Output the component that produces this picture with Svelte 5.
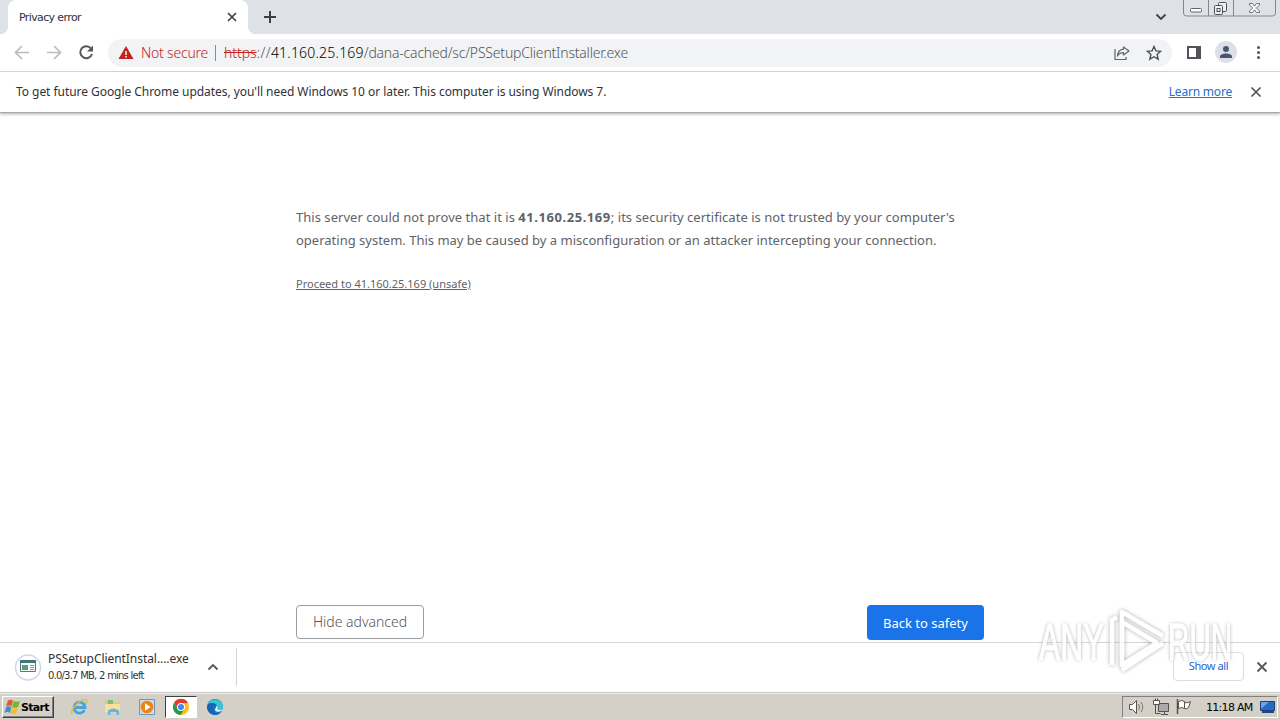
<script>
	const url = { host: '41.160.25.169', path: '/dana-cached/sc/PSSetupClientInstaller.exe' };
</script>

<div class="screen">
	<header class="tabstrip">
		<div class="tab">
			<span class="tab-title">Privacy error</span>
			<svg class="tab-close" width="10" height="10" viewBox="0 0 10 10"><path d="M1 1l8 8M9 1L1 9" stroke="#3c4043" stroke-width="1.7" /></svg>
		</div>
		<svg class="new-tab" width="14" height="14" viewBox="0 0 14 14"><path d="M7 1v12M1 7h12" stroke="#3c4043" stroke-width="2" /></svg>
		<svg class="tab-search" width="12" height="8" viewBox="0 0 12 8"><path d="M1.5 1.5L6 6l4.5-4.5" fill="none" stroke="#3c4043" stroke-width="1.8" /></svg>
		<svg class="window-buttons" width="94" height="18" viewBox="0 0 94 18">
			<path d="M.5 0v13q0 3 3 3h86q3 0 3-3V0M25.500 0v16M50.500 0v16" fill="none" stroke="#84888e" />
			<rect x="7.500" y="8.500" width="11" height="3.500" rx="1" fill="#fff" stroke="#60646b" />
			<g fill="#eef0f3" stroke="#4d5158"><rect x="35.500" y="2.500" width="8" height="9" rx="1" /><rect x="31.500" y="5.500" width="8" height="9" rx="1" /><rect x="34" y="8.500" width="3" height="3" /></g>
			<path d="M66.500 3.500h3l2 2.500 2-2.500h3V5l-3 3 3 3v1.500h-3l-2-2.500-2 2.500h-3V11l3-3-3-3z" fill="#f4f5f7" stroke="#666a70" stroke-width=".9" />
		</svg>
	</header>

	<nav class="toolbar">
		<svg class="nav-icons" width="108" height="36" viewBox="0 0 108 36" fill="none">
			<path d="M29 17.500H16M22 11l-6.500 6.500L22 24M47 17.500h13M54 11l6.500 6.500L54 24" stroke="#babcbe" stroke-width="1.7" />
			<path d="M91 13.500A6 6 0 1 0 92 19" stroke="#55585c" stroke-width="2" />
			<path d="M93 10.500v6h-6z" fill="#55585c" />
		</svg>
		<div class="omnibox">
			<svg class="warning" width="16" height="14" viewBox="0 0 16 14"><path d="M8 0l7.500 13H.5z" fill="#c5221f" /><path d="M8 5v4M8 10v1.600" stroke="#fff" stroke-width="1.500" /></svg>
			<span class="security">Not secure</span>
			<span class="divider"></span>
			<span class="url"><s>https</s><span class="scheme">://</span><b>{url.host}</b><span class="path">{url.path}</span></span>
			<svg class="share" width="18" height="18" viewBox="0 0 18 18" fill="none" stroke="#5f6368" stroke-width="1.200"><path d="M2 5v10.500h11V13" /><path d="M10.500 3l5.500 4-5.500 4V8.700C7.500 8.700 5.500 10 4.500 12c.3-4 2.500-6.500 6-6.800z" stroke-linejoin="round" /></svg>
			<svg class="star" width="16" height="16" viewBox="0 0 16 16"><path d="M8 1.500l1.900 4.400 4.800.4-3.600 3.200 1.100 4.700L8 11.700l-4.200 2.500 1.100-4.700L1.300 6.300l4.800-.4z" fill="none" stroke="#505358" stroke-width="1.400" /></svg>
		</div>
		<svg class="actions" width="108" height="36" viewBox="0 0 108 36">
			<path d="M16 12h12v11H16z" fill="#fff" stroke="#505358" stroke-width="2" /><path d="M24 11h5v13h-5z" fill="#505358" />
			<circle cx="54" cy="17" r="11" fill="#dde1e7" /><circle cx="54" cy="14" r="3" fill="#4a5670" /><path d="M48 23v-1.500c0-4 12-4 12 0V23z" fill="#4a5670" />
			<g fill="#505358"><circle cx="86.500" cy="12.500" r="1.500" /><circle cx="86.500" cy="17.500" r="1.500" /><circle cx="86.500" cy="22.500" r="1.500" /></g>
		</svg>
	</nav>

	<div class="infobar">
		<span class="notice">To get future Google Chrome updates, you'll need Windows 10 or later. This computer is using Windows 7.</span>
		<a href="#learn">Learn more</a>
		<svg width="12" height="12" viewBox="0 0 12 12"><path d="M1.500 1.500l9 9M10.500 1.500l-9 9" stroke="#505358" stroke-width="1.700" /></svg>
	</div>

	<main>
		<p class="reason">
			<span class="line first">This server could not prove that it is <strong>{url.host}</strong>; its security certificate is not trusted by your computer's</span>
			<span class="line">operating system. This may be caused by a misconfiguration or an attacker intercepting your connection.</span>
		</p>
		<a class="proceed" href="#proceed">Proceed to {url.host} (unsafe)</a>
		<div class="buttons">
			<button class="hide">Hide advanced</button>
			<button class="back">Back to safety</button>
		</div>
	</main>

	<section class="downloads">
		<svg class="file-icon" width="28" height="28" viewBox="0 0 28 28">
			<circle cx="14" cy="14.500" r="12.500" fill="#fff" stroke="#ccd6ec" stroke-width="1.500" />
			<path d="M6.500 7.500h15v11h-15z" fill="#f6fbfa" stroke="#5c787b" /><path d="M6 7h16v3H6z" fill="#437477" /><path d="M8 12h6v5H8z" fill="#5c9a80" /><path d="M16 12.500h4M16 14.500h4M16 16.500h4" stroke="#8a9da8" />
		</svg>
		<div class="file">
			<span class="file-name">PSSetupClientInstal....exe</span>
			<span class="file-status">0.0/3.7 MB, 2 mins left</span>
		</div>
		<svg class="chevron" width="12" height="8" viewBox="0 0 12 8"><path d="M1.500 6.500L6 2l4.500 4.500" fill="none" stroke="#55585c" stroke-width="1.800" /></svg>
		<span class="separator"></span>
		<button class="show-all">Show all</button>
		<svg class="shelf-close" width="12" height="12" viewBox="0 0 12 12"><path d="M1.500 1.500l9 9M10.500 1.500l-9 9" stroke="#55585c" stroke-width="1.800" /></svg>
	</section>

	<footer class="taskbar">
		<div class="start">
			<svg width="17" height="16" viewBox="0 0 17 16"><path d="M4 1.500q2.500-1.500 5 0L7.500 7.500q-2.500-2-5.500 0z" fill="#e5592b" /><path d="M9.700 2q3 1.500 6.300 0l-2 6q-3 1.500-6 0z" fill="#72b82e" /><path d="M2 8.200q2.500-1.700 5.300 0L6 14q-2.500-2-5.500 0z" fill="#438dd5" /><path d="M8 8.700q3 1.500 6 0l-1.700 5.800q-3 1.500-5.800 0z" fill="#f4bd2a" /></svg>
			<b>Start</b>
		</div>
		<div class="apps">
			<span class="app">
				<svg width="18" height="18" viewBox="0 0 18 18" fill="none"><path d="M14.500 12A5.500 5.500 0 1 1 15 9.500H5" stroke="#43a6df" stroke-width="2.800" /><path d="M2.500 16C-2 13 12-1 16.500 2c1 1 .2 2.600-.7 3.800" stroke="#e7b93d" stroke-width="1.400" /></svg>
			</span>
			<span class="app">
				<svg width="18" height="18" viewBox="0 0 18 18"><path d="M1 3h5l1 1.500h9V14H1z" fill="#e9c662" /><path d="M4 2h5v4H4z" fill="#79bd78" /><path d="M1 6h15v8H1z" fill="#f7e29d" /><path d="M4 17v-4.500q5-4 11 0V17h-2.500v-3h-6v3z" fill="#69b5df" /></svg>
			</span>
			<span class="app">
				<svg width="18" height="18" viewBox="0 0 18 18"><path d="M1.500 1.500h15v15h-15z" fill="#cbdcea" stroke="#6e99bc" /><circle cx="9" cy="9" r="6.300" fill="#ed8415" /><path d="M7 5.200v7.600L12.500 9z" fill="#fff" /></svg>
			</span>
			<span class="app active">
				<svg width="18" height="18" viewBox="0 0 18 18"><circle cx="9" cy="9" r="8" fill="#fbc116" /><path d="M2 5a8 8 0 0 1 14 0L9 5.200 6 11z" fill="#e33b2e" /><path d="M2 5a8 8 0 0 0 6.500 12l4-6L6 11z" fill="#229b4b" /><circle cx="9" cy="9" r="4" fill="#fff" /><circle cx="9" cy="9" r="3" fill="#4285f4" /></svg>
			</span>
			<span class="app">
				<svg width="18" height="18" viewBox="0 0 18 18"><circle cx="9" cy="9" r="8" fill="#1677c5" /><path d="M2 6C4-1 17 0 17 9c0 4-5 4-7 2 2-3 0-6-4-6-2 0-3 .5-4 1z" fill="#38c5d5" /><path d="M1 9c1-5 8-5 10-1-4-1-5 3-3 6 2 2 5 2 7 0-4 6-14 2-14-5z" fill="#1764b0" /><path d="M10.500 8c2 1-.5 4 2.500 4 2 0 3.500-.5 4-1.500-1 4.500-8 4-8 1z" fill="#e9f4f7" /></svg>
			</span>
		</div>
		<div class="tray">
			<svg width="78" height="20" viewBox="0 0 78 20" fill="#fff" stroke="#55534f">
				<path d="M6.500 7.500h3l4-4v13l-4-4h-3z" /><path d="M15.500 7q2 3 0 6M18 5q3.500 5 0 10" fill="none" stroke="#77746e" />
				<path d="M35.500 6.500h10v8h-10zM38 17.500h7M41.500 14.500v3" fill="#aaa" /><path d="M32.500 7.500v9h5" fill="none" /><path d="M30.500 3.500h6v4h-6zM32.500 1.500v2M34.500 1.500v2" />
				<path d="M54.500 2v15" stroke-width="1.500" /><path d="M55.500 4.500q3-2 6 0v7q-3-2-6 0zM61.500 5.500q3 1 6-1l-2 6q-2 2-4 1" />
			</svg>
			<span class="clock">11:18 AM</span>
			<svg width="18" height="16" viewBox="0 0 18 16"><path d="M1.500 2.500h14v9h-14z" fill="#2869c4" stroke="#1d4277" /><path d="M2 3h8l-7 6H2z" fill="#67a5e8" /><path d="M3 13h12" stroke="#24477a" stroke-width="2" /></svg>
		</div>
	</footer>

	<div class="watermark">
		<span class="any">ANY</span>
		<svg width="62" height="70" viewBox="0 0 62 70" fill="none" stroke-linejoin="round">
			<g class="halo" stroke="#fff" stroke-width="4.500"><path d="M7 59V14l5-3" /><path d="M17 48V6l41 24" /><path d="M17 16v43l35-22-35-21" /><path d="M58 37L17 64" /></g>
		</svg>
		<span class="run">RUN</span>
	</div>
</div>

<style>
	:global(body) {
		margin: 0;
		overflow: hidden;
	}

	.screen {
		width: 1280px;
		height: 720px;
		display: flex;
		flex-direction: column;
		position: relative;
		overflow: hidden;
		background: #fff;
		color: #303236;
		font-family: 'Noto Sans', sans-serif;
	}

	.screen * {
		box-sizing: border-box;
	}

	svg {
		flex: none;
		display: block;
	}

	span, a, strong {
		white-space: nowrap;
	}

	.tabstrip {
		height: 34px;
		background: #dee1e6;
		display: flex;
		align-items: center;
	}

	.tab {
		width: 240px;
		height: 34px;
		margin-left: 8px;
		padding: 0 11px;
		border-radius: 8px 8px 0 0;
		background: #fff;
		display: flex;
		align-items: center;
		justify-content: space-between;
		position: relative;
	}

	.tab::before, .tab::after {
		content: '';
		position: absolute;
		bottom: 0;
		left: -8px;
		width: 8px;
		height: 8px;
		background: radial-gradient(circle at 0 0, #dee1e6 8px, #fff 8.500px);
	}

	.tab::after {
		left: 240px;
		transform: scaleX(-1);
	}

	.tab-title {
		font: 11px/16px 'DejaVu Sans', sans-serif;
		letter-spacing: -0.62px;
		padding-top: 1px;
	}

	.new-tab {
		margin-left: 15px;
	}

	.tab-search {
		margin-left: auto;
	}

	.window-buttons {
		margin: 0 3px 0 16px;
		align-self: flex-start;
	}

	.toolbar {
		height: 38px;
		border-bottom: 1px solid #dadce0;
		display: flex;
		align-items: center;
	}

	.omnibox {
		width: 1064px;
		height: 28px;
		border-radius: 14px;
		background: #f1f3f4;
		display: flex;
		align-items: center;
		padding: 0 10px;
		font-size: 14px;
		font-weight: 300;
	}

	.security {
		margin-left: 7px;
		width: 67px;
		color: #c5221f;
		letter-spacing: -0.2px;
	}

	.divider {
		width: 1px;
		height: 16px;
		margin: 0 8px 0 7px;
		background: #888c90;
	}

	.url {
		letter-spacing: -0.2px;
		color: #53575b;
	}

	.url b {
		font-weight: 300;
		color: #000;
		letter-spacing: 0.2px;
	}

	.scheme {
		letter-spacing: 0.4px;
	}

	s {
		color: #c5221f;
		letter-spacing: -0.05px;
	}

	.share {
		margin-left: auto;
		margin-right: 15px;
	}

	.infobar {
		height: 41px;
		border-bottom: 1px solid #aaa;
		box-shadow: 0 1px 3px #aaa;
		display: flex;
		align-items: center;
		padding: 0 18px 0 16px;
		font-size: 12px;
	}

	.notice {
		letter-spacing: -0.05px;
		padding-bottom: 2px;
	}

	.infobar a {
		margin-left: auto;
		margin-right: 18px;
		padding-bottom: 2px;
		color: #2470cc;
		letter-spacing: -0.2px;
	}

	main {
		height: 529px;
		width: 688px;
		margin: 0 auto;
		padding-top: 93px;
		display: flex;
		flex-direction: column;
		color: #5f6368;
	}

	.reason {
		margin: 0;
		font-size: 13px;
		line-height: 23px;
	}

	.line {
		display: block;
	}

	.first {
		letter-spacing: 0.03px;
	}

	strong {
		letter-spacing: 0.55px;
	}

	.proceed {
		margin-top: 24px;
		align-self: flex-start;
		font-size: 11px;
		line-height: 16px;
		color: #5f6368;
	}

	.buttons {
		display: flex;
		justify-content: space-between;
		align-items: flex-start;
		margin-top: auto;
		margin-bottom: 2px;
	}

	button {
		padding: 0;
		font-family: inherit;
		text-align: center;
		border-radius: 4px;
	}

	.hide {
		width: 128px;
		height: 34px;
		padding-bottom: 1px;
		border: 1px solid #999da1;
		background: #fff;
		color: #53575b;
		font-size: 14px;
		font-weight: 300;
	}

	.back {
		width: 117px;
		height: 35px;
		border: 0;
		background: #1a73e8;
		color: #fff;
		font-size: 13px;
	}

	.downloads {
		height: 51px;
		border-top: 1px solid #d5d5d5;
		border-bottom: 1px solid #c6c8c8;
		display: flex;
		align-items: center;
		padding: 0 12px 2px 14px;
		background: #fff;
	}

	.file {
		margin-left: 6px;
		width: 144px;
		display: flex;
		flex-direction: column;
	}

	.file-name {
		font-size: 12px;
		line-height: 17px;
		letter-spacing: -0.06px;
	}

	.file-status {
		font: 10px/17px 'DejaVu Sans', sans-serif;
		letter-spacing: -0.8px;
		word-spacing: 0.2px;
	}

	.chevron {
		margin-left: 15px;
	}

	.separator {
		width: 1px;
		height: 38px;
		margin-left: 17px;
		background: #d0d2d4;
	}

	.show-all {
		width: 71px;
		height: 29px;
		margin-left: auto;
		padding-bottom: 2px;
		border: 1px solid #dadce0;
		background: #fff;
		color: #1967d2;
		font-size: 11px;
		letter-spacing: -0.4px;
	}

	.shelf-close {
		margin-left: 12px;
	}

	.taskbar {
		height: 27px;
		border-top: 1px solid #f0eeea;
		background: #d4d0c8;
		display: flex;
		align-items: center;
	}

	.start {
		width: 52px;
		height: 22px;
		margin-left: 2px;
		padding-left: 1px;
		border: 1px solid;
		border-color: #fff #404040 #404040 #fff;
		box-shadow: inset -1px -1px #808080;
		display: flex;
		align-items: center;
		color: #000;
		font: 11px 'DejaVu Sans', sans-serif;
		letter-spacing: -0.7px;
	}

	.apps {
		display: flex;
		margin-left: 9px;
	}

	.app {
		width: 32px;
		height: 22px;
		margin-right: 2px;
		display: flex;
		align-items: center;
		justify-content: center;
	}

	.active {
		background: #fff;
		border: 1px solid;
		border-color: #404040 #fff #fff #404040;
	}

	.tray {
		width: 156px;
		height: 22px;
		margin-left: auto;
		margin-right: 2px;
		border: 1px solid;
		border-color: #808080 #fff #fff #808080;
		display: flex;
		align-items: center;
	}

	.clock {
		width: 47px;
		margin-left: 5px;
		margin-right: 6px;
		color: #000;
		font: 11px 'DejaVu Sans', sans-serif;
		letter-spacing: -0.7px;
	}

	.watermark {
		position: absolute;
		left: 1039px;
		top: 606px;
		width: 198px;
		height: 70px;
		display: flex;
		align-items: center;
		opacity: 0.8;
		color: #fff;
		font: 52px/60px 'Liberation Sans', sans-serif;
		-webkit-text-stroke: 1.5px #fff;
		text-shadow: 0 0 5px #999, 0 0 3px #bbb;
		pointer-events: none;
	}

	.halo {
		filter: drop-shadow(0 0 2px #999);
	}

	.any, .run {
		width: 66px;
		padding-top: 2px;
		transform: scaleX(0.61);
		transform-origin: left;
	}

	.run {
		margin-left: 1px;
		transform: scaleX(0.57);
	}
</style>
